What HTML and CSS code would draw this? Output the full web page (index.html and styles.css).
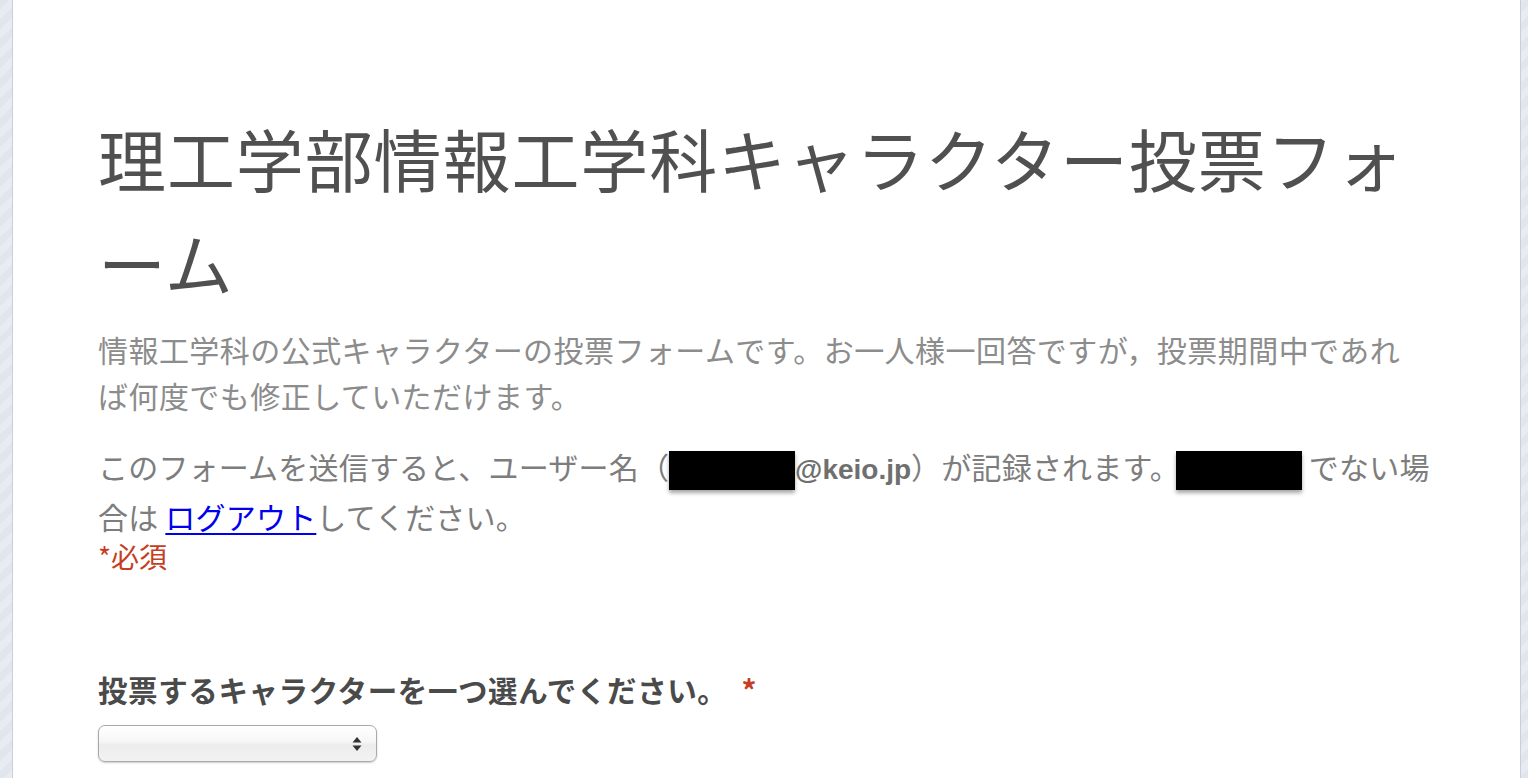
FILE: index.html
```html
<!DOCTYPE html>
<html lang="ja">
<head>
    <meta charset="UTF-8">
    <title>理工学部情報工学科キャラクター投票フォーム</title>
    <link rel="stylesheet" href="styles.css">
</head>
<body>
    <div class="form-sheet">
        <div class="form-body">
            <h1 class="form-title">理工学部情報工学科キャラクター投票フォーム</h1>
            <div class="form-desc">情報工学科の公式キャラクターの投票フォームです。お一人様一回答ですが，投票期間中であれ<br>ば何度でも修正していただけます。</div>
            <div class="login-notice">このフォームを送信すると、ユーザー名（<span class="redact"></span><b class="mail">@keio.jp</b>）が記録されます。<span class="redact redact-second"></span> でない場合は <a href="#">ログアウト</a>してください。</div>
            <div class="required-note">*必須</div>

            <div class="question">
                <label class="q-label" for="character">投票するキャラクターを一つ選んでください。<span class="q-star">*</span></label>
                <div class="select-box" id="character">
                    <svg width="10" height="16" viewBox="0 0 10 16"><path d="M5 1L9.5 6.5H0.5Z M5 15L9.5 9.5H0.5Z" fill="#333"/></svg>
                </div>
            </div>
        </div>
    </div>
</body>
</html>
```

FILE: styles.css
```css
/* old google forms look, screenshot scale */
html, body { margin: 0; padding: 0; }
body { background: repeating-linear-gradient(-45deg, #e1e5ee 0, #e1e5ee 7px, #e8ebf2 7px, #e8ebf2 14px); font-family: "Noto Sans CJK JP", sans-serif; overflow: hidden; }
.form-sheet { margin: 0 7px 0 12px; background: #fff; border-left: 1px solid #c9ced8; border-right: 1px solid #c9ced8; min-height: 100vh; box-sizing: border-box; padding: 106px 0 0 85px; }
.form-body { width: 1345px; }
.form-title { margin: 0; font-size: 68px; line-height: 104px; font-weight: 400; letter-spacing: 0.9px; color: #505050; }
.form-desc { margin-top: 12px; font-size: 30px; line-height: 46px; letter-spacing: 0.45px; color: #8c8c8c; }
.login-notice { margin-top: 25px; font-size: 30px; line-height: 47px; letter-spacing: 0.2px; color: #7d7d7d; }
.login-notice a { color: #0000ee; text-decoration: underline; text-underline-offset: 4px; text-decoration-thickness: 2px; }
.mail { font-family: "Liberation Sans", Arial, sans-serif; font-size: 28px; letter-spacing: 0; color: #6f6f6f; }
.redact { display: inline-block; width: 126px; height: 39px; background: #000; vertical-align: -11px; box-shadow: 0 3px 4px rgba(0, 0, 0, 0.35); }
.redact-second { margin-left: -4px; }
.required-note { font-size: 28px; line-height: 32px; color: #c53d22; }
.question { margin-top: 97px; }
.q-label { display: block; font-size: 29.5px; line-height: 40px; font-weight: bold; letter-spacing: 0.6px; color: #4a4a4a; }
.q-star { color: #c53d22; margin-left: 14px; }
.select-box { margin-top: 16px; width: 279px; height: 37px; box-sizing: border-box; border: 1px solid #a9a9a9; border-radius: 7px; background: linear-gradient(#ffffff, #f6f6f6 45%, #ececec 55%, #f3f3f3); box-shadow: 0 1px 2px rgba(0, 0, 0, 0.2); display: flex; align-items: center; justify-content: flex-end; padding-right: 14px; }
```
